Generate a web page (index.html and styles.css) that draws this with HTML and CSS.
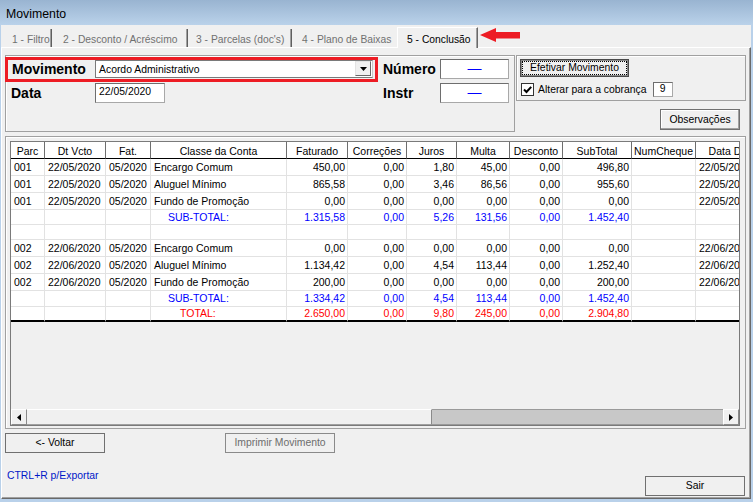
FILE: index.html
```html
<!DOCTYPE html>
<html>
<head>
<meta charset="utf-8">
<title>Movimento</title>
<link rel="stylesheet" href="styles.css">
</head>
<body>
<div class="window">
  <div class="titlebar">Movimento</div>
  <div class="client">
    <div class="tabs">
      <div class="tab t1">1 - Filtro</div>
      <div class="tab t2">2 - Desconto / Acréscimo</div>
      <div class="tab t3">3 - Parcelas (doc's)</div>
      <div class="tab t4">4 - Plano de Baixas</div>
      <div class="tab active">5 - Conclusão</div>
      <svg class="arrow" width="40" height="14" viewBox="0 0 40 14"><polygon points="0,7 16,0 16,4 40,4 40,10.5 16,10.5 16,14" fill="#ed1c24"/></svg>
    </div>
    <div class="page">
      <div class="rowA">
        <div class="groupL">
          <div class="colL">
            <div class="redbox">
              <span class="lbl lbl-mov">Movimento</span>
              <div class="combo">
                <span class="combo-text">Acordo Administrativo</span>
                <span class="dd"><svg width="7" height="4" viewBox="0 0 7 4"><polygon points="0,0 7,0 3.5,4" fill="#000"/></svg></span>
              </div>
            </div>
            <div class="datarow">
              <span class="lbl lbl-data">Data</span>
              <div class="input date">22/05/2020</div>
            </div>
          </div>
          <div class="colR">
            <div class="numrow">
              <span class="lbl lbl-num">Número</span>
              <div class="input num"><span class="dash">—</span></div>
            </div>
            <div class="numrow">
              <span class="lbl lbl-num">Instr</span>
              <div class="input num"><span class="dash">—</span></div>
            </div>
          </div>
        </div>
        <div class="rightcol">
          <div class="groupR">
            <div class="btn efetivar"><span class="focus">Efetivar Movimento</span></div>
            <div class="chkrow">
              <span class="chk"><svg width="11" height="11" viewBox="0 0 11 11"><path d="M2 5.5 L4.5 8 L9.2 2.8" fill="none" stroke="#000" stroke-width="2"/></svg></span>
              <span class="chk-label">Alterar para a cobrança</span>
              <div class="input small">9</div>
            </div>
          </div>
          <div class="btn obs">Observações</div>
        </div>
      </div>

      <div class="gridpanel">
        <div class="grid">
          <div class="gridbody">
            <div class="row hd">
              <div>Parc</div><div>Dt Vcto</div><div>Fat.</div><div>Classe da Conta</div><div>Faturado</div><div>Correções</div><div>Juros</div><div>Multa</div><div>Desconto</div><div>SubTotal</div><div>NumCheque</div><div>Data Doc</div>
            </div>
            <div class="row dr">
              <div>001</div><div>22/05/2020</div><div>05/2020</div><div>Encargo Comum</div><div class="n">450,00</div><div class="n">0,00</div><div class="n">1,80</div><div class="n">45,00</div><div class="n">0,00</div><div class="n">496,80</div><div></div><div>22/05/2020</div>
            </div>
            <div class="row dr">
              <div>001</div><div>22/05/2020</div><div>05/2020</div><div>Aluguel Mínimo</div><div class="n">865,58</div><div class="n">0,00</div><div class="n">3,46</div><div class="n">86,56</div><div class="n">0,00</div><div class="n">955,60</div><div></div><div>22/05/2020</div>
            </div>
            <div class="row dr">
              <div>001</div><div>22/05/2020</div><div>05/2020</div><div>Fundo de Promoção</div><div class="n">0,00</div><div class="n">0,00</div><div class="n">0,00</div><div class="n">0,00</div><div class="n">0,00</div><div class="n">0,00</div><div></div><div>22/05/2020</div>
            </div>
            <div class="row sr blue">
              <div></div><div></div><div></div><div class="lab-sub">SUB-TOTAL:</div><div class="n">1.315,58</div><div class="n">0,00</div><div class="n">5,26</div><div class="n">131,56</div><div class="n">0,00</div><div class="n">1.452,40</div><div></div><div></div>
            </div>
            <div class="row sr">
              <div></div><div></div><div></div><div></div><div></div><div></div><div></div><div></div><div></div><div></div><div></div><div></div>
            </div>
            <div class="row dr">
              <div>002</div><div>22/06/2020</div><div>05/2020</div><div>Encargo Comum</div><div class="n">0,00</div><div class="n">0,00</div><div class="n">0,00</div><div class="n">0,00</div><div class="n">0,00</div><div class="n">0,00</div><div></div><div>22/06/2020</div>
            </div>
            <div class="row dr">
              <div>002</div><div>22/06/2020</div><div>05/2020</div><div>Aluguel Mínimo</div><div class="n">1.134,42</div><div class="n">0,00</div><div class="n">4,54</div><div class="n">113,44</div><div class="n">0,00</div><div class="n">1.252,40</div><div></div><div>22/06/2020</div>
            </div>
            <div class="row dr">
              <div>002</div><div>22/06/2020</div><div>05/2020</div><div>Fundo de Promoção</div><div class="n">200,00</div><div class="n">0,00</div><div class="n">0,00</div><div class="n">0,00</div><div class="n">0,00</div><div class="n">200,00</div><div></div><div>22/06/2020</div>
            </div>
            <div class="row sr2 blue">
              <div></div><div></div><div></div><div class="lab-sub">SUB-TOTAL:</div><div class="n">1.334,42</div><div class="n">0,00</div><div class="n">4,54</div><div class="n">113,44</div><div class="n">0,00</div><div class="n">1.452,40</div><div></div><div></div>
            </div>
            <div class="row tr red">
              <div></div><div></div><div></div><div class="lab-tot">TOTAL:</div><div class="n">2.650,00</div><div class="n">0,00</div><div class="n">9,80</div><div class="n">245,00</div><div class="n">0,00</div><div class="n">2.904,80</div><div></div><div></div>
            </div>
          </div>
          <div class="hscroll">
            <div class="sb-btn"><svg width="4" height="7" viewBox="0 0 4 7"><polygon points="4,0 0,3.5 4,7" fill="#000"/></svg></div>
            <div class="sb-thumb"></div>
            <div class="sb-track"></div>
            <div class="sb-btn"><svg width="4" height="7" viewBox="0 0 4 7"><polygon points="0,0 4,3.5 0,7" fill="#000"/></svg></div>
          </div>
        </div>
      </div>

      <div class="rowC">
        <div class="btn voltar">&lt;- Voltar</div>
        <div class="btn imprimir">Imprimir Movimento</div>
      </div>
      <div class="rowD">
        <span class="hint">CTRL+R p/Exportar</span>
        <div class="btn sair">Sair</div>
      </div>
    </div>
  </div>
</div>
</body>
</html>
```
FILE: styles.css
```css
* { box-sizing: border-box; }
html, body { margin: 0; padding: 0; }
body {
  width: 753px;
  height: 502px;
  overflow: hidden;
  font-family: "Liberation Sans", Arial, sans-serif;
  font-size: 10.4px;
  color: #000;
  background: #b9d1ea;
}
.window {
  width: 753px;
  height: 502px;
  display: flex;
  flex-direction: column;
  background: #b9d1ea;
}
.titlebar {
  height: 25px;
  flex: none;
  background: linear-gradient(#99b4d1, #bad2ea);
  padding: 2px 0 0 6px;
  line-height: 24px;
  font-size: 12.3px;
}
.client {
  flex: 1;
  margin: 0 2px 3px 1px;
  background: #f0f0f0;
  display: flex;
  flex-direction: column;
}

/* tabs */
.tabs {
  height: 22px;
  flex: none;
  display: flex;
  align-items: flex-end;
  padding-left: 2px;
}
.tab {
  height: 18px;
  padding-top: 3px;
  line-height: 15px;
  font-size: 10.3px;
  color: #707070;
  white-space: nowrap;
  border-right: 1px solid #5f5f5f;
  box-shadow: inset -1px 0 #a0a0a0;
}
.t1 { width: 49px; padding-left: 9px; }
.t2 { width: 136px; padding-left: 11px; }
.t3 { width: 104px; padding-left: 8px; }
.t4 { width: 105px; padding-left: 10px; border-right: none; box-shadow: none; }
.tab.active {
  width: 81px;
  height: 21px;
  margin-bottom: -1px;
  padding: 4px 0 0 9px;
  color: #000;
  background: #f0f0f0;
  border-top: 1px solid #fff;
  border-left: 1px solid #fff;
  border-right: 1px solid #696969;
  box-shadow: inset -1px 0 #a0a0a0;
  position: relative;
  z-index: 1;
}
.arrow {
  align-self: flex-start;
  margin: 3px 0 0 2px;
}

/* tab page */
.page {
  flex: 1;
  display: flex;
  flex-direction: column;
  border-top: 1px solid #fff;
  border-left: 1px solid #fff;
  border-right: 1px solid #696969;
  border-bottom: 1px solid #696969;
  box-shadow: inset -1px -1px #a0a0a0;
  padding: 7px 4px 2px 3px;
}

.rowA {
  display: flex;
  gap: 1px;
  height: 77px;
  flex: none;
}
.groupL {
  width: 510px;
  height: 77px;
  border: 1px solid #a0a0a0;
  box-shadow: inset 1px 1px #fff;
  display: flex;
  align-items: flex-start;
}
.colL { display: flex; flex-direction: column; }
.redbox {
  margin: 1px 0 0 -1px;
  width: 373px;
  height: 25px;
  border: 3px solid #ed1c24;
  display: flex;
  align-items: flex-start;
}
.lbl {
  font-family: "Liberation Sans", Arial, sans-serif;
  font-weight: bold;
  font-size: 14px;
  white-space: nowrap;
}
.lbl-mov { width: 87px; padding-left: 4px; line-height: 19px; }
.combo {
  width: 278px;
  height: 18px;
  background: #fff;
  border: 1px solid #7a7a7a;
  border-right-color: #c8c8c8;
  display: flex;
  align-items: flex-start;
}
.combo-text {
  flex: 1;
  padding-left: 3px;
  line-height: 17px;
  font-size: 10.4px;
}
.dd {
  width: 16px;
  height: 15px;
  margin: 0 1px 0 0;
  background: #f0f0f0;
  border-top: 1px solid #e3e3e3;
  border-left: 1px solid #e3e3e3;
  border-right: 1px solid #696969;
  border-bottom: 1px solid #696969;
  display: flex;
  align-items: center;
  justify-content: center;
}
.datarow {
  display: flex;
  align-items: center;
  height: 20px;
  margin-top: 1px;
}
.lbl-data { width: 89px; padding-left: 5px; }
.input {
  background: #fff;
  border: 1px solid #6e6e6e;
  border-right-color: #a8a8a8;
  border-bottom-color: #a8a8a8;
}
.input.date {
  width: 70px;
  height: 20px;
  padding: 1px 0 0 3px;
  line-height: 13px;
}
.colR {
  margin-left: 5px;
  padding-top: 3px;
  display: flex;
  flex-direction: column;
  gap: 4px;
}
.numrow { display: flex; align-items: center; height: 20px; }
.lbl-num { width: 57px; }
.input.num {
  width: 69px;
  height: 20px;
  text-align: center;
  line-height: 16px;
}
.dash { color: #0000ff; font-size: 14px; }

.rightcol {
  width: 230px;
  display: flex;
  flex-direction: column;
  align-items: flex-end;
}
.groupR {
  width: 230px;
  height: 46px;
  border: 1px solid #a0a0a0;
  box-shadow: inset 1px 1px #fff;
  padding: 3px 0 0 3px;
  display: flex;
  flex-direction: column;
  align-items: flex-start;
}
.btn {
  background: #f0f0f0;
  border: 1px solid #707070;
  text-align: center;
  white-space: nowrap;
  font-size: 10.4px;
}
.efetivar {
  width: 109px;
  height: 18px;
  border: 1px solid #4a4a4a;
  box-shadow: inset 0 0 0 1px #8a8a8a;
  padding: 1px;
  display: flex;
}
.focus {
  flex: 1;
  border: 1px dotted #000;
  line-height: 12px;
}
.chkrow {
  display: flex;
  align-items: center;
  height: 15px;
  margin-top: 5px;
}
.chk {
  width: 13px;
  height: 13px;
  margin-left: 1px;
  background: #fff;
  border: 1px solid #333;
  display: flex;
  align-items: center;
  justify-content: center;
}
.chk-label { margin-left: 4px; }
.input.small {
  width: 20px;
  height: 15px;
  margin-left: 6px;
  text-align: center;
  line-height: 12px;
}
.obs {
  width: 80px;
  height: 21px;
  margin: 8px 6px 0 0;
  line-height: 19px;
  box-shadow: inset -1px -1px #a0a0a0, inset 1px 1px #fff;
}

/* grid */
.gridpanel {
  margin-top: 4px;
  height: 293px;
  flex: none;
  border: 1px solid #a0a0a0;
  box-shadow: inset 1px 1px #fff;
  padding: 4px 5px 2px 4px;
}
.grid {
  height: 100%;
  border: 1px solid #7a7a7a;
  display: flex;
  flex-direction: column;
}
.gridbody {
  flex: 1;
  overflow: hidden;
  background: #f0f0f0;
  font-size: 10.5px;
}
.row {
  display: grid;
  grid-template-columns: 34px 61px 45px 136px 61px 59px 50px 53px 53px 69px 64px 70px;
  width: 755px;
}
.row > div {
  background: #fff;
  border-right: 1px solid #e2e2e2;
  border-bottom: 1px solid #e2e2e2;
  padding: 0 2px 0 3px;
  white-space: nowrap;
  overflow: hidden;
}
.row > div.n { text-align: right; }
.hd > div {
  height: 17px;
  padding: 3px 0 0 0;
  line-height: 13px;
  text-align: center;
  border-right-color: #6e6e6e;
  border-bottom: 1px solid #000;
}
.dr > div { height: 17px; line-height: 16px; }
.sr > div { height: 15px; line-height: 14px; }
.sr2 > div { height: 16px; line-height: 15px; }
.tr > div { height: 15px; line-height: 13px; border-bottom: 2px solid #000; }
.blue { color: #0000ff; }
.red { color: #ff0000; }
.row > div.lab-sub { padding-left: 17px; }
.row > div.lab-tot { padding-left: 29px; }

.hscroll {
  height: 16px;
  flex: none;
  display: flex;
}
.sb-btn {
  width: 16px;
  height: 16px;
  background: #f0f0f0;
  border-top: 1px solid #fff;
  border-left: 1px solid #fff;
  border-right: 1px solid #8a8a8a;
  border-bottom: 1px solid #8a8a8a;
  display: flex;
  align-items: center;
  justify-content: center;
}
.sb-thumb {
  width: 405px;
  background: #f0f0f0;
  border-top: 1px solid #fff;
  border-right: 1px solid #8a8a8a;
  border-bottom: 1px solid #a0a0a0;
}
.sb-track {
  flex: 1;
  background: #c8c8c8;
  border-top: 1px solid #9a9a9a;
  border-bottom: 1px solid #9a9a9a;
}

.rowC {
  margin-top: 4px;
  height: 20px;
  flex: none;
  display: flex;
}
.voltar { width: 100px; height: 20px; line-height: 18px; }
.imprimir {
  width: 110px;
  height: 20px;
  margin-left: 120px;
  line-height: 18px;
  color: #6d6d6d;
  border-color: #8a8a8a;
}
.rowD {
  margin-top: auto;
  display: flex;
  align-items: flex-end;
  justify-content: space-between;
}
.hint {
  color: #0018c8;
  margin: 0 0 13px 2px;
  line-height: 14px;
}
.sair {
  width: 100px;
  height: 20px;
  margin-right: 1px;
  line-height: 18px;
}
```
